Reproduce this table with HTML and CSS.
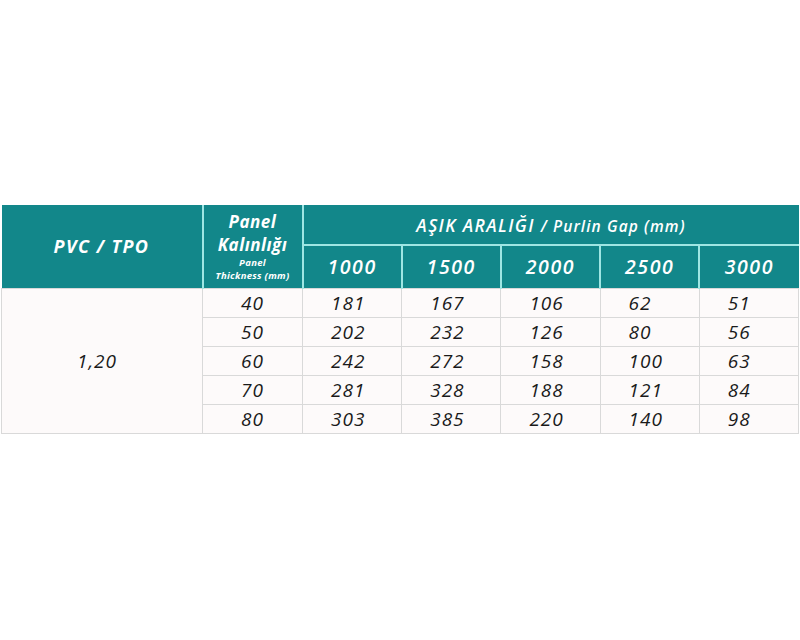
FILE: index.html
```html
<!DOCTYPE html>
<html lang="tr">
<head>
<meta charset="utf-8">
<title>PVC / TPO</title>
<link rel="stylesheet" href="styles.css">
</head>
<body>
<div class="wrap">
<table class="spec">
  <thead>
    <tr class="h1">
      <th rowspan="2" class="c-mat">PVC / TPO</th>
      <th rowspan="2" class="c-thk"><span class="thk-tr">Panel</span><span class="thk-tr">Kalınlığı</span><span class="thk-en">Panel</span><span class="thk-en">Thickness (mm)</span></th>
      <th colspan="5" class="c-gap">AŞIK ARALIĞI <span class="gap-en">/ Purlin Gap (mm)</span></th>
    </tr>
    <tr class="h2">
      <th>1000</th><th>1500</th><th>2000</th><th>2500</th><th>3000</th>
    </tr>
  </thead>
  <tbody>
    <tr><td rowspan="5" class="c-mat">1,20</td><td class="c-thk">40</td><td>181</td><td>167</td><td>106</td><td>62</td><td>51</td></tr>
    <tr><td class="c-thk">50</td><td>202</td><td>232</td><td>126</td><td>80</td><td>56</td></tr>
    <tr><td class="c-thk">60</td><td>242</td><td>272</td><td>158</td><td>100</td><td>63</td></tr>
    <tr><td class="c-thk">70</td><td>281</td><td>328</td><td>188</td><td>121</td><td>84</td></tr>
    <tr><td class="c-thk">80</td><td>303</td><td>385</td><td>220</td><td>140</td><td>98</td></tr>
  </tbody>
</table>
</div>
</body>
</html>
```
FILE: styles.css
```css
html, body {
  margin: 0;
  padding: 0;
  background: #ffffff;
}
body {
  font-family: "Open Sans", "DejaVu Sans", sans-serif;
  font-style: italic;
  color: #1a1a1a;
}
.wrap {
  padding-top: 205px;
  padding-left: 1px;
}
.spec {
  border-collapse: collapse;
  width: 798px;
  table-layout: fixed;
}
.spec th {
  background: #12878a;
  color: #ffffff;
  font-weight: 700;
  border: 2px solid #9fe6e3;
  border-top: none;
  padding: 0;
  text-align: center;
  vertical-align: middle;
}
.spec tr.h1 th:first-child { border-left: none; }
.spec tr.h1 th:last-child, .spec tr.h2 th:last-child { border-right: none; }
.spec thead tr:last-child th, .spec th[rowspan] { border-bottom: none; }
.spec th.c-mat { width: 200px; font-size: 18px; letter-spacing: 1.4px; }
.spec th.c-thk { width: 98px; }
.thk-tr { display: block; font-size: 17px; line-height: 23px; letter-spacing: 0.5px; }
.thk-en { display: block; font-size: 9.5px; line-height: 13px; letter-spacing: 0.3px; }
.spec tr.h1 { height: 40px; }
.spec tr.h1 .c-gap { font-size: 17.5px; font-weight: 600; letter-spacing: 1.4px; }
.gap-en { font-size: 15.5px; font-weight: 600; letter-spacing: 1.1px; }
.spec tr.h2 { height: 43px; }
.spec tr.h2 th { font-size: 19.5px; font-weight: 600; letter-spacing: 1.6px; }
.spec td {
  background: #fdfafa;
  border: 1px solid #d9d9d9;
  font-size: 19px;
  font-weight: 400;
  height: 28px;
  padding: 0 0 0 28px;
  text-align: left;
  vertical-align: middle;
  line-height: 26px;
  letter-spacing: 1px;
}
.spec td.c-thk {
  text-align: center;
  padding: 0;
}
.spec td.c-mat {
  text-align: center;
  padding: 0 10px 0 0;
}
```
